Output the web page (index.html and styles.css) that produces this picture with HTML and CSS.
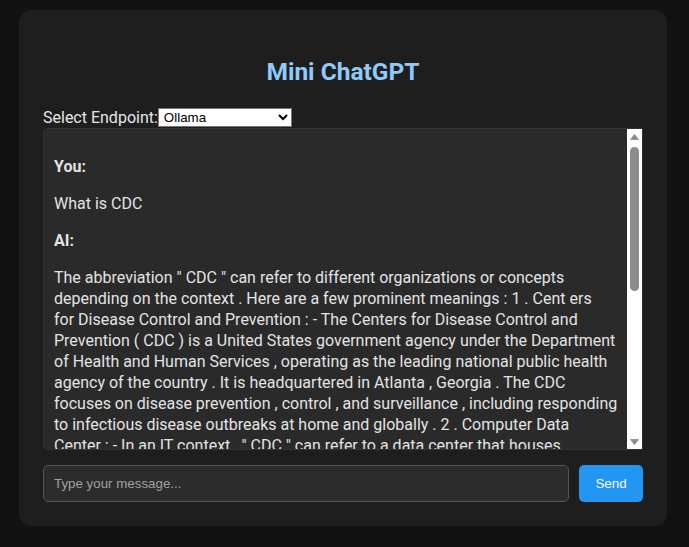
FILE: index.html
```html
<!DOCTYPE html>
<html lang="en">
<head>
<meta charset="utf-8">
<title>Mini ChatGPT</title>
<link rel="stylesheet" href="styles.css">
</head>
<body>
<div class="card">
  <h2 class="title">Mini ChatGPT</h2>
  <div class="endpoint-row"><label class="endpoint-label" for="endpoint">Select Endpoint:</label><select id="endpoint" class="endpoint-select"><option>Ollama</option><option>OpenAI</option></select></div>
  <div class="chat-box">
    <div class="messages">
      <p><strong>You:</strong></p>
      <p>What is CDC</p>
      <p><strong>AI:</strong></p>
      <p class="reply">The abbreviation " CDC " can refer to different organizations or concepts<br>
depending on the context . Here are a few prominent meanings : 1 . Cent ers<br>
for Disease Control and Prevention : - The Centers for Disease Control and<br>
Prevention ( CDC ) is a United States government agency under the Department<br>
of Health and Human Services , operating as the leading national public health<br>
agency of the country . It is headquartered in Atlanta , Georgia . The CDC<br>
focuses on disease prevention , control , and surveillance , including responding<br>
to infectious disease outbreaks at home and globally . 2 . Computer Data<br>
Center : - In an IT context , " CDC " can refer to a data center that houses</p>
    </div>
    <div class="scrollbar">
      <div class="sb-btn"><svg width="9" height="6" viewBox="0 0 9 6"><polygon points="4.5,0.5 8.5,5.5 0.5,5.5" fill="#8c8c8c" stroke="#8c8c8c" stroke-linejoin="round" stroke-width="0.8"/></svg></div>
      <div class="sb-track"><div class="sb-thumb"></div></div>
      <div class="sb-btn"><svg width="9" height="6" viewBox="0 0 9 6"><polygon points="0.5,0.5 8.5,0.5 4.5,5.5" fill="#8c8c8c" stroke="#8c8c8c" stroke-linejoin="round" stroke-width="0.8"/></svg></div>
    </div>
  </div>
  <div class="input-row">
    <input class="msg-input" type="text" placeholder="Type your message...">
    <button class="send-btn" type="button">Send</button>
  </div>
</div>
</body>
</html>
```
FILE: styles.css
```css
* { box-sizing: border-box; }
html, body { margin: 0; padding: 0; }
body {
  background: #121212;
  color: #e0e0e0;
  font-family: Roboto, "Noto Sans", sans-serif;
  font-size: 16px;
  height: 547px;
  overflow: hidden;
}
.card {
  width: 648px;
  margin: 10px 0 0 19px;
  padding: 24px;
  background: #1e1e1e;
  border-radius: 12px;
}
.title {
  margin: 22px 0 19px;
  font-size: 24.5px;
  line-height: 32px;
  font-weight: 700;
  color: #90caf9;
  text-align: center;
}
.endpoint-row {
  height: 21px;
  line-height: 21px;
  display: flex;
  align-items: center;
}
.endpoint-label { color: #e6e6e6; }
.endpoint-select {
  width: 134px;
  height: 19px;
  font-family: "Liberation Sans", Arial, sans-serif;
  font-size: 13.33px;
  color: #000;
  background: #fff;
  border: 1px solid #767676;
  border-radius: 0;
  padding: 0 0 0 1px;
}
.chat-box {
  display: flex;
  height: 322px;
  background: #2a2a2a;
  border: 1px solid #333;
  border-radius: 5px 0 0 5px;
}
.messages {
  flex: 1;
  min-width: 0;
  padding: 0 10px;
  overflow: hidden;
  line-height: 21px;
  color: #e3e3e3;
}
.messages p { margin: 16px 0; }
.messages p:first-child { margin-top: 27px; }
.messages .reply { white-space: nowrap; }
.scrollbar {
  width: 15px;
  background: #fff;
  display: flex;
  flex-direction: column;
}
.sb-btn {
  height: 15px;
  display: flex;
  align-items: center;
  justify-content: center;
}
.sb-btn svg { display: block; }
.sb-track {
  flex: 1;
  padding: 3px 3px 0;
}
.sb-thumb {
  height: 144px;
  background: #8c8c8c;
  border-radius: 5px;
}
.input-row {
  display: flex;
  gap: 10px;
  margin-top: 15px;
}
.msg-input {
  flex: 1;
  height: 37px;
  padding: 0 10px;
  background: #2c2c2c;
  border: 1px solid #555;
  border-radius: 5px;
  color: #e0e0e0;
  font-family: "Liberation Sans", Arial, sans-serif;
  font-size: 13.33px;
  outline: none;
}
.msg-input::placeholder { color: #a0a0a0; }
.send-btn {
  width: 64px;
  height: 37px;
  background: #2196f3;
  color: #fff;
  border: none;
  border-radius: 5px;
  font-family: "Liberation Sans", Arial, sans-serif;
  font-size: 13.33px;
}
```
